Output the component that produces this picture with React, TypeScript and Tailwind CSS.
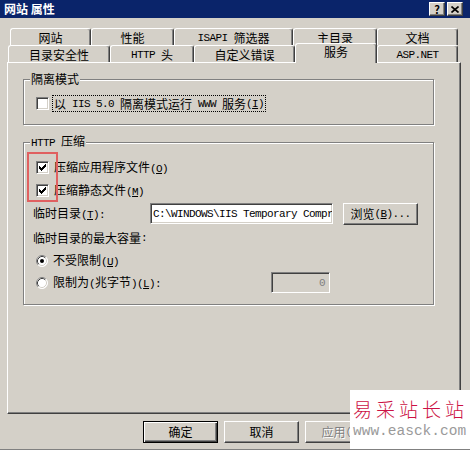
import clsx from 'clsx'
import type { ReactNode } from 'react'

// latin runs: narrow mono like the dialog's half-width glyphs
const L = ({ children }: { children: ReactNode }) => (
  <span className="font-['Liberation_Mono',monospace] text-[11px] tracking-[-0.6px]">{children}</span>
)

const raised =
  'border border-t-white border-l-white border-r-[#404040] border-b-[#404040] shadow-[inset_-1px_-1px_0_#808080]'
const sunken =
  'border border-t-[#808080] border-l-[#808080] border-r-white border-b-white shadow-[inset_1px_1px_0_#404040,inset_-1px_-1px_0_#d4d0c8]'

const Tab = ({ className, children }: { className: string; children: ReactNode }) => (
  <div
    className={clsx(
      'flex h-[17px] shrink-0 items-center justify-center rounded-t-[3px] border-l border-t border-r border-l-white border-t-white border-r-[#404040] pt-[1px] shadow-[inset_-1px_0_0_#808080]',
      className
    )}
  >
    {children}
  </div>
)

const CheckBox = ({ checked }: { checked?: boolean }) => (
  <span className={clsx('flex h-[13px] w-[13px] shrink-0 items-center justify-center bg-white', sunken)}>
    {checked && (
      <svg width="7" height="7" viewBox="0 0 7 7">
        <path d="M0 2h1v1h1v1h1V3h1V2h1V1h1V0h1v3h-1v1h-1v1h-1v1h-1v1H2V6H1V5H0z" fill="black" />
      </svg>
    )}
  </span>
)

const Radio = ({ checked }: { checked?: boolean }) => (
  <svg width="12" height="12" viewBox="0 0 12 12" className="shrink-0">
    <circle cx="6" cy="6" r="5.5" fill="white" />
    <path d="M2.11 9.89A5.5 5.5 0 0 1 9.89 2.11" stroke="#808080" fill="none" />
    <path d="M9.89 2.11A5.5 5.5 0 0 1 2.11 9.89" stroke="#ffffff" fill="none" />
    <path d="M2.82 9.18A4.5 4.5 0 0 1 9.18 2.82" stroke="#404040" fill="none" />
    <path d="M9.18 2.82A4.5 4.5 0 0 1 2.82 9.18" stroke="#d4d0c8" fill="none" />
    {checked && <circle cx="6" cy="6" r="2" fill="black" />}
  </svg>
)

const Btn = ({
  children,
  primary,
  disabled,
}: {
  children: ReactNode
  primary?: boolean
  disabled?: boolean
}) => (
  <div
    className={clsx(
      'flex h-[22px] w-[75px] shrink-0 items-center justify-center',
      primary
        ? 'border border-black shadow-[inset_1px_1px_0_white,inset_-1px_-1px_0_#404040,inset_-2px_-2px_0_#808080]'
        : raised,
      disabled && 'text-[#808080] [text-shadow:1px_1px_0_white]'
    )}
  >
    {children}
  </div>
)

const Group = ({ title, className, children }: { title: ReactNode; className: string; children: ReactNode }) => (
  <fieldset
    className={clsx(
      'w-[411px] border border-[#808080] shadow-[1px_1px_0_white,inset_1px_1px_0_white]',
      className
    )}
  >
    <legend className="ml-[6px] bg-[#d4d0c8] px-[1px] leading-[14px]">{title}</legend>
    {children}
  </fieldset>
)

export default function App() {
  return (
    <div className="relative h-[450px] w-[470px] overflow-hidden border-b border-[#808080] bg-[#d4d0c8] font-['Noto_Sans_CJK_SC',sans-serif] text-[12px] leading-[14px] text-black">
      {/* title bar */}
      <div className="flex h-[18px] items-center justify-between bg-[#0a246a] pl-[4px] pr-[7px]">
        <span className="font-bold text-white">网站 属性</span>
        <div className="flex gap-[2px]">
          <div className={clsx('flex h-[14px] w-[16px] items-center justify-center bg-[#d4d0c8] text-[11px] font-bold', raised)}>
            ?
          </div>
          <div className={clsx('flex h-[14px] w-[16px] items-center justify-center bg-[#d4d0c8]', raised)}>
            <svg width="8" height="7" viewBox="0 0 8 7">
              <path d="M0.5 0.5l7 6M7.5 0.5l-7 6" stroke="black" strokeWidth="1.6" />
            </svg>
          </div>
        </div>
      </div>

      {/* tabs */}
      <div className="pt-[10px]">
        <div className="ml-[10px] flex">
          <Tab className="w-[81px]">网站</Tab>
          <Tab className="w-[83px]">性能</Tab>
          <Tab className="w-[119px]">
            <L>ISAPI&nbsp;</L>筛选器
          </Tab>
          <Tab className="w-[84px]">主目录</Tab>
          <Tab className="w-[81px]">文档</Tab>
        </div>
        <div className="ml-[8px] flex h-[17px] items-end">
          <Tab className="w-[102px]">目录安全性</Tab>
          <Tab className="w-[84px]">
            <L>HTTP&nbsp;</L>头
          </Tab>
          <Tab className="w-[101px]">自定义错误</Tab>
          <Tab className="relative z-10 -mb-px h-[20px] w-[82px] items-start bg-[#d4d0c8] pt-[1px]">服务</Tab>
          <Tab className="w-[81px]">
            <L>ASP.NET</L>
          </Tab>
        </div>
      </div>

      {/* page */}
      <div className={clsx('ml-[7px] h-[352px] w-[454px] pl-[15px] pt-[9px]', raised)}>
        <Group title="隔离模式" className="h-[53px]">
          <div className="ml-[12px] mt-[9px] flex h-[17px] items-center gap-[3px]">
            <CheckBox />
            <span className="flex h-[17px] items-center border border-dotted border-black px-[1px]">
              以<L>&nbsp;IIS 5.0&nbsp;</L>隔离模式运行<L>&nbsp;WWW&nbsp;</L>服务<L>(<u>I</u>)</L>
            </span>
          </div>
        </Group>

        <Group
          title={
            <>
              <L>HTTP&nbsp;</L>压缩
            </>
          }
          className="mt-[9px] h-[171px]"
        >
          <div className="flex flex-col pt-[6px]">
            <div className="ml-[12px] flex h-[23px] items-center gap-[5px]">
              <CheckBox checked />
              <span>
                压缩应用程序文件<L>(<u>O</u>)</L>
              </span>
            </div>
            <div className="ml-[12px] flex h-[23px] items-center gap-[5px]">
              <CheckBox checked />
              <span>
                压缩静态文件<L>(<u>M</u>)</L>
              </span>
            </div>
            <div className="ml-[9px] flex h-[23px] items-center">
              <span className="w-[117px]">
                临时目录<L>(<u>T</u>):</L>
              </span>
              <div className={clsx('flex h-[21px] w-[183px] items-center overflow-hidden whitespace-nowrap bg-white pl-[2px]', sunken)}>
                <L>C:\WINDOWS\IIS Temporary Compr</L>
              </div>
              <div className="ml-[10px]">
                <Btn>
                  浏览<L>(<u>B</u>)...</L>
                </Btn>
              </div>
            </div>
            <div className="ml-[9px] flex h-[25px] items-center">
              临时目录的最大容量<L>:</L>
            </div>
            <div className="ml-[12px] flex h-[22px] items-center gap-[5px]">
              <Radio checked />
              <span>
                不受限制<L>(<u>U</u>)</L>
              </span>
            </div>
            <div className="ml-[12px] flex h-[21px] items-center gap-[5px]">
              <Radio />
              <span className="w-[213px]">
                限制为<L>(</L>兆字节<L>)(<u>L</u>):</L>
              </span>
              <div className={clsx('flex h-[21px] w-[59px] items-center justify-end pr-[4px] text-[#808080]', sunken)}>
                <L>0</L>
              </div>
            </div>
          </div>
        </Group>
      </div>

      {/* dialog buttons */}
      <div className="ml-[143px] mt-[7px] flex gap-[6px]">
        <Btn primary>确定</Btn>
        <Btn>取消</Btn>
        <Btn disabled>
          应用<L>(<u>A</u>)</L>
        </Btn>
      </div>

      {/* annotation */}
      <div className="absolute left-[27px] top-[152px] h-[50px] w-[31px] border-2 border-[#e06060]" />

      {/* watermark */}
      <div className="absolute right-0 top-[390px] flex h-[60px] w-[120px] flex-col bg-white pl-[3px] pt-[8px]">
        <span className="text-[19px] font-light leading-[22px] tracking-[4px] text-[#cc1144]">易采站长站</span>
        <span className="mt-[3px] font-['Liberation_Mono',monospace] text-[14.5px] leading-[16px] text-[#9a9a9a]">
          www.easck.com
        </span>
      </div>
    </div>
  )
}
